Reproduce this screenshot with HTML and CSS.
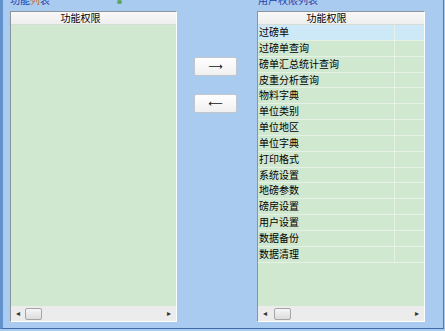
FILE: index.html
```html
<!DOCTYPE html>
<html>
<head>
<meta charset="utf-8">
<link rel="stylesheet" href="styles.css">
</head>
<body>
<div class="frame">
  <div class="panel panel-left">
    <div class="title">功能<span class="hl">列</span>表<span class="gdot"></span></div>
    <div class="listbox">
      <div class="head"><div class="hcell hcell-left">功能权限</div></div>
      <div class="body"></div>
      <div class="hscroll">
        <span class="arrow">&#9666;</span>
        <span class="thumb"></span>
        <span class="track"></span>
        <span class="arrow">&#9656;</span>
      </div>
    </div>
  </div>
  <div class="buttons">
    <button class="btn">&#10230;</button>
    <button class="btn">&#10229;</button>
  </div>
  <div class="panel panel-right">
    <div class="title">用户权限列表</div>
    <div class="listbox">
      <div class="head"><div class="hcell hcell-right">功能权限</div></div>
      <div class="body">
        <div class="row sel"><span class="c1">过磅单</span><span class="c2"></span></div>
        <div class="row"><span class="c1">过磅单查询</span><span class="c2"></span></div>
        <div class="row"><span class="c1">磅单汇总统计查询</span><span class="c2"></span></div>
        <div class="row"><span class="c1">皮重分析查询</span><span class="c2"></span></div>
        <div class="row"><span class="c1">物料字典</span><span class="c2"></span></div>
        <div class="row"><span class="c1">单位类别</span><span class="c2"></span></div>
        <div class="row"><span class="c1">单位地区</span><span class="c2"></span></div>
        <div class="row"><span class="c1">单位字典</span><span class="c2"></span></div>
        <div class="row"><span class="c1">打印格式</span><span class="c2"></span></div>
        <div class="row"><span class="c1">系统设置</span><span class="c2"></span></div>
        <div class="row"><span class="c1">地磅参数</span><span class="c2"></span></div>
        <div class="row"><span class="c1">磅房设置</span><span class="c2"></span></div>
        <div class="row"><span class="c1">用户设置</span><span class="c2"></span></div>
        <div class="row"><span class="c1">数据备份</span><span class="c2"></span></div>
        <div class="row"><span class="c1">数据清理</span><span class="c2"></span></div>
      </div>
      <div class="hscroll">
        <span class="arrow">&#9666;</span>
        <span class="thumb"></span>
        <span class="track"></span>
        <span class="arrow">&#9656;</span>
      </div>
    </div>
  </div>
</div>
</body>
</html>
```
FILE: styles.css
```css
html, body {
  margin: 0;
  padding: 0;
}
body {
  width: 445px;
  height: 331px;
  background: #a9cbef;
  overflow: hidden;
  font-family: "Noto Sans CJK SC", "Noto Sans", sans-serif;
  font-size: 10px;
  color: #000;
}
.frame {
  box-sizing: border-box;
  width: 444px;
  height: 329px;
  border-left: 3px solid #6391cb;
  border-right: 1px solid #4d7cb6;
  border-bottom: 1px solid #3f6da8;
  display: flex;
  padding-left: 7px;
}
.panel {
  display: flex;
  flex-direction: column;
}
.panel-left {
  width: 167px;
}
.panel-right {
  width: 168px;
  margin-left: 20px;
}
.title {
  height: 10px;
  line-height: 10px;
  margin-top: -5px;
  margin-bottom: 6px;
  color: #1e40a8;
  white-space: nowrap;
  display: flex;
  align-items: flex-end;
}
.panel-right .title {
  padding-left: 1px;
}
.hl {
  color: #d0683a;
}
.gdot {
  display: inline-block;
  width: 5px;
  height: 4px;
  margin-left: 67px;
  margin-bottom: 1px;
  background: #5aa85a;
  border-radius: 2px;
}
.listbox {
  box-sizing: border-box;
  height: 311px;
  border: 1px solid;
  border-color: #8d949c #ffffff #ffffff #8d949c;
  display: flex;
  flex-direction: column;
  background: #cfe8cf;
}
.head {
  height: 12px;
  line-height: 12px;
  border-bottom: 1px solid #d6dcd6;
  background: linear-gradient(#f8f8f8, #eeeeee);
  display: flex;
}
.hcell {
  text-align: center;
}
.hcell-left {
  width: 139px;
}
.hcell-right {
  width: 137px;
}
.body {
  flex: 1;
  display: flex;
  flex-direction: column;
}
.row {
  box-sizing: border-box;
  height: 15.85px;
  line-height: 14.85px;
  border-bottom: 1px solid #e6f2e6;
  display: flex;
  flex-shrink: 0;
}
.row.sel {
  background: #cde8f6;
}
.c1 {
  box-sizing: border-box;
  width: 137px;
  padding-left: 1px;
  border-right: 1px solid #e6f2e6;
}
.c2 {
  flex: 1;
}
.hscroll {
  height: 15px;
  background: #ececec;
  display: flex;
  align-items: center;
}
.arrow {
  width: 14px;
  text-align: center;
  font-family: "DejaVu Sans", sans-serif;
  font-size: 8px;
  color: #333;
}
.thumb {
  box-sizing: border-box;
  width: 17px;
  height: 12px;
  border: 1px solid #a5a5a5;
  border-radius: 2px;
  background: linear-gradient(#f6f6f6, #dcdcdc);
}
.panel-right .thumb {
  margin-left: 2px;
}
.track {
  flex: 1;
}
.buttons {
  margin-left: 17px;
  padding-top: 57px;
  display: flex;
  flex-direction: column;
  gap: 18px;
}
.btn {
  box-sizing: border-box;
  width: 43px;
  height: 19px;
  margin: 0;
  padding: 0;
  border: 1px solid #c2c6cb;
  border-radius: 2px;
  background: linear-gradient(#ffffff, #f0f0f0);
  font-family: "DejaVu Sans", sans-serif;
  font-size: 10px;
  line-height: 17px;
  color: #111;
}
```
